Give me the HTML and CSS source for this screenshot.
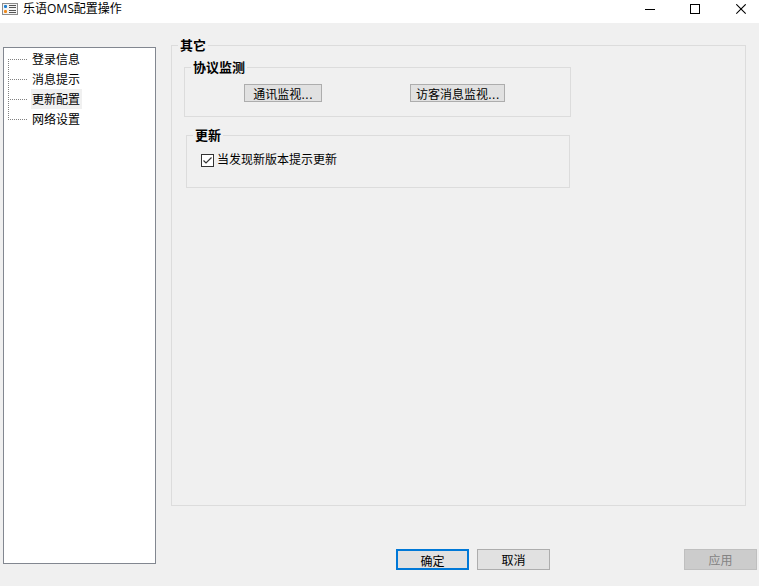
FILE: index.html
```html
<!DOCTYPE html>
<html lang="zh-CN">
<head>
    <meta charset="UTF-8">
    <meta name="viewport" content="width=device-width, initial-scale=1.0">
    <title>乐语OMS配置操作</title>
    <link rel="stylesheet" href="styles.css">
</head>
<body>
    <header class="titlebar">
        <svg class="app-icon" width="16" height="12" viewBox="0 0 16 12" aria-hidden="true">
            <rect x="0.5" y="0.5" width="15" height="11" fill="#f4f4f4" stroke="#8c8c8c"/>
            <path d="M2 3.5h3M3.5 2v3" stroke="#1e7fd0" stroke-width="2"/>
            <path d="M2 8.5h3M3.5 7v3" stroke="#f08a1c" stroke-width="2"/>
            <path d="M7 2.5h7M7 4.5h7M7 7.5h7M7 9.5h7" stroke="#555"/>
        </svg>
        <h1>乐语OMS配置操作</h1>
        <div class="window-buttons">
            <button type="button" aria-label="最小化">
                <svg width="11" height="11" viewBox="0 0 11 11"><path d="M1 5.5h10" stroke="#000"/></svg>
            </button>
            <button type="button" aria-label="最大化">
                <svg width="11" height="11" viewBox="0 0 11 11"><rect x="0.5" y="0.5" width="9" height="9" fill="none" stroke="#000"/></svg>
            </button>
            <button type="button" aria-label="关闭">
                <svg width="11" height="11" viewBox="0 0 11 11"><path d="M0.3 0.3l9.4 9.4M9.7 0.3l-9.4 9.4" stroke="#000" stroke-width="1.1"/></svg>
            </button>
        </div>
    </header>
    <main>
        <nav class="tree">
            <ul>
                <li><a href="#login">登录信息</a></li>
                <li><a href="#message">消息提示</a></li>
                <li><a href="#update" class="selected">更新配置</a></li>
                <li><a href="#network">网络设置</a></li>
            </ul>
        </nav>
        <form class="settings">
            <fieldset class="page">
                <legend>其它</legend>
                <fieldset class="monitor">
                    <legend>协议监测</legend>
                    <div class="monitor-buttons">
                        <button type="button" class="btn btn-small">通讯监视...</button>
                        <button type="button" class="btn btn-small">访客消息监视...</button>
                    </div>
                </fieldset>
                <fieldset class="update">
                    <legend>更新</legend>
                    <label class="check">
                        <input type="checkbox" checked>
                        <span>当发现新版本提示更新</span>
                    </label>
                </fieldset>
            </fieldset>
            <div class="actions">
                <button type="submit" class="btn btn-default">确定</button>
                <button type="button" class="btn">取消</button>
                <button type="button" class="btn btn-apply" disabled>应用</button>
            </div>
        </form>
    </main>
</body>
</html>
```

FILE: styles.css
```css
* {
    box-sizing: border-box;
}
body {
    margin: 0;
    min-height: 100vh;
    display: flex;
    flex-direction: column;
    background: #f0f0f0;
    color: #000;
    font: 12px/16px "DejaVu Sans", "Noto Sans CJK SC", sans-serif;
}
button {
    font: inherit;
    color: inherit;
}

/* title bar */
.titlebar {
    display: flex;
    align-items: center;
    height: 23px;
    padding: 0 0 5px 2px;
    background: #fff;
}
.titlebar h1 {
    margin: 0 0 0 5px;
    font: 12px/16px "Open Sans", "Noto Sans CJK SC", sans-serif;
}
.window-buttons {
    display: flex;
    margin-left: auto;
}
.window-buttons button {
    display: flex;
    align-items: center;
    justify-content: center;
    width: 46px;
    height: 18px;
    padding: 0 0 0 10px;
    border: none;
    background: none;
}

main {
    flex: 1;
    display: grid;
    grid-template-columns: 153px 1fr;
    column-gap: 15px;
    padding: 16px 2px 16px 3px;
}

/* left tree */
.tree {
    margin: 8px 0 6px;
    padding: 1px 0 0 4px;
    border: 1px solid #828790;
    background: #fff;
}
.tree ul {
    margin: 0;
    padding: 0;
    list-style: none;
}
.tree li {
    display: flex;
    height: 20px;
}
.tree li::before {
    content: "";
    width: 20px;
    margin-right: 3px;
    background-image:
        repeating-linear-gradient(90deg, #808080 0 1px, transparent 1px 2px),
        repeating-linear-gradient(180deg, #808080 0 1px, transparent 1px 2px);
    background-size: 20px 1px, 1px 20px;
    background-position: 0 10px, 0 0;
    background-repeat: no-repeat;
}
.tree li:first-child::before {
    background-position: 0 10px, 0 10px;
}
.tree li:last-child::before {
    background-size: 20px 1px, 1px 10px;
}
.tree a {
    padding: 0 2px 0 1px;
    line-height: 22px;
    color: inherit;
    text-decoration: none;
}
.tree .selected {
    background: #f0f0f0;
}

/* settings page */
.settings {
    display: flex;
    flex-direction: column;
}
fieldset {
    min-width: 0;
    margin: 0;
    padding: 0 6px;
    border: 1px solid #dcdcdc;
}
legend {
    padding: 0 2px;
    font-size: 13px;
    font-weight: bold;
    line-height: 13px;
}
.page {
    flex: 1;
    margin: 0 11px 43px 0;
}
.monitor {
    max-width: 387px;
    margin: 9px 6px 12px;
    padding-bottom: 14px;
}
.update {
    max-width: 384px;
    margin: 0 8px;
    padding-bottom: 18px;
}
.monitor-buttons {
    display: flex;
    gap: 88px;
    padding: 10px 0 0 53px;
}
.btn {
    width: 73px;
    height: 21px;
    padding: 2px 0 0;
    border: 1px solid #adadad;
    background: #e1e1e1;
    line-height: 18px;
    white-space: nowrap;
}
.btn-small {
    width: auto;
    min-width: 78px;
    height: 18px;
    padding: 2px 5px 0;
    line-height: 16px;
}
.btn-default {
    border: 2px solid #0078d7;
}
.btn:disabled {
    border-color: #bfbfbf;
    background: #ccc;
    color: #838383;
}
.check {
    display: flex;
    align-items: center;
    gap: 3px;
    padding: 9px 0 0 8px;
    line-height: 18px;
}
.check input {
    appearance: none;
    width: 13px;
    height: 13px;
    margin: 0;
    border: 1px solid #333;
    background: #fff url("data:image/svg+xml,%3Csvg xmlns='http://www.w3.org/2000/svg' viewBox='0 0 11 11'%3E%3Cpath d='M1.5 5.5L4 8L9.5 2.5' fill='none' stroke='%23333' stroke-width='1.2'/%3E%3C/svg%3E");
}
.actions {
    display: flex;
    gap: 8px;
    padding-left: 225px;
}
.btn-apply {
    margin-left: auto;
}
```
